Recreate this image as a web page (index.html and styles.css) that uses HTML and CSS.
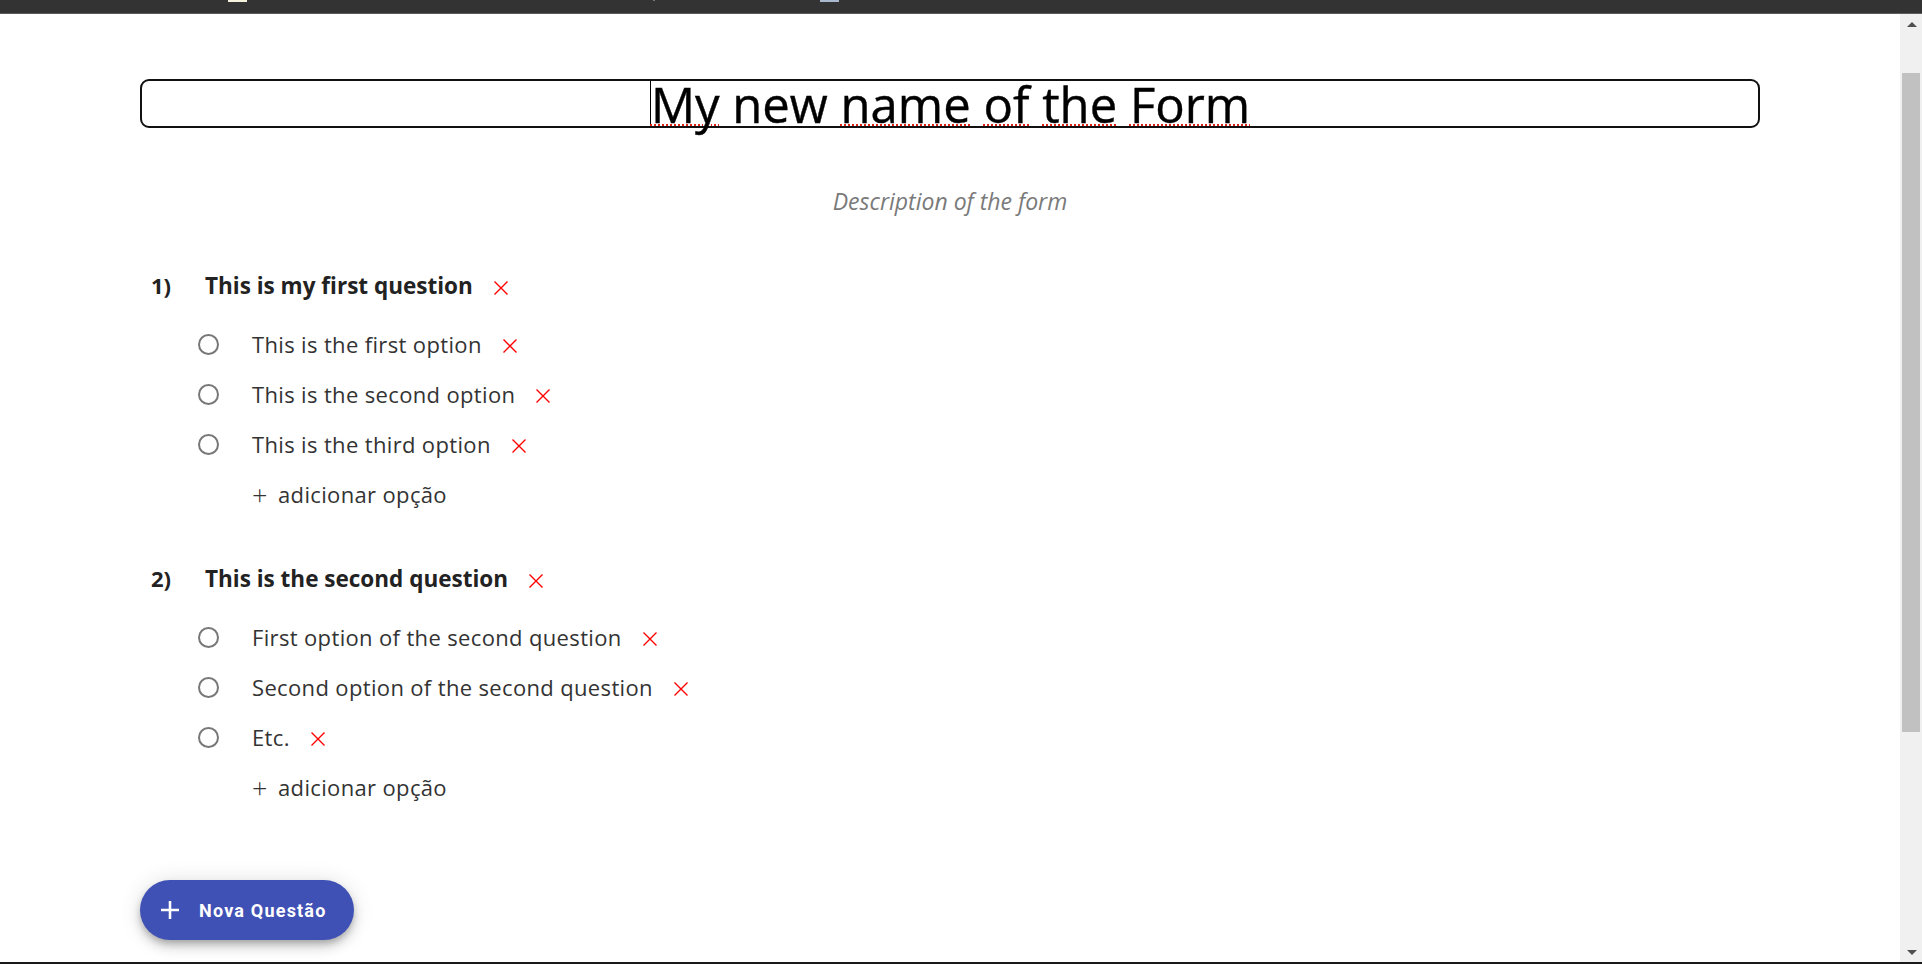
FILE: index.html
```html
<!DOCTYPE html>
<html lang="pt">
<head>
<meta charset="utf-8">
<title>Form</title>
<link rel="stylesheet" href="styles.css">
</head>
<body>
<div class="window">
  <div class="topbar"><span class="mark mark-a"></span><span class="mark mark-dot"></span><span class="mark mark-b"></span></div>
  <div class="viewport">
    <main class="page">
      <div class="title-box">
        <span class="title-text"><span class="sp">My</span> new <span class="sp">name</span> <span class="sp">of</span> <span class="sp">the</span> <span class="sp">Form</span></span>
      </div>
      <p class="description">Description of the form</p>

      <section class="question">
        <div class="q-row">
          <span class="q-num">1)</span>
          <span class="q-title">This is my first question</span>
          <svg class="del" viewBox="0 0 16 16"><path d="M1.5 1.5L14.5 14.5M14.5 1.5L1.5 14.5"/></svg>
        </div>
        <ul class="options">
          <li class="opt"><span class="radio"></span><span class="opt-text">This is the first option</span><svg class="del" viewBox="0 0 16 16"><path d="M1.5 1.5L14.5 14.5M14.5 1.5L1.5 14.5"/></svg></li>
          <li class="opt"><span class="radio"></span><span class="opt-text">This is the second option</span><svg class="del" viewBox="0 0 16 16"><path d="M1.5 1.5L14.5 14.5M14.5 1.5L1.5 14.5"/></svg></li>
          <li class="opt"><span class="radio"></span><span class="opt-text">This is the third option</span><svg class="del" viewBox="0 0 16 16"><path d="M1.5 1.5L14.5 14.5M14.5 1.5L1.5 14.5"/></svg></li>
          <li class="opt add"><span class="plus">+</span><span class="opt-text">adicionar opção</span></li>
        </ul>
      </section>

      <section class="question">
        <div class="q-row">
          <span class="q-num">2)</span>
          <span class="q-title">This is the second question</span>
          <svg class="del" viewBox="0 0 16 16"><path d="M1.5 1.5L14.5 14.5M14.5 1.5L1.5 14.5"/></svg>
        </div>
        <ul class="options">
          <li class="opt"><span class="radio"></span><span class="opt-text">First option of the second question</span><svg class="del" viewBox="0 0 16 16"><path d="M1.5 1.5L14.5 14.5M14.5 1.5L1.5 14.5"/></svg></li>
          <li class="opt"><span class="radio"></span><span class="opt-text">Second option of the second question</span><svg class="del" viewBox="0 0 16 16"><path d="M1.5 1.5L14.5 14.5M14.5 1.5L1.5 14.5"/></svg></li>
          <li class="opt"><span class="radio"></span><span class="opt-text">Etc.</span><svg class="del" viewBox="0 0 16 16"><path d="M1.5 1.5L14.5 14.5M14.5 1.5L1.5 14.5"/></svg></li>
          <li class="opt add"><span class="plus">+</span><span class="opt-text">adicionar opção</span></li>
        </ul>
      </section>

      <button class="fab" type="button">
        <svg class="fab-icon" viewBox="5 5 14 14"><path d="M19 13h-6v6h-2v-6H5v-2h6V5h2v6h6v2z"/></svg>
        <span class="fab-label">Nova Questão</span>
      </button>
    </main>
    <div class="scrollbar">
      <div class="sb-btn"><span class="tri-up"></span></div>
      <div class="sb-track"><div class="sb-thumb"></div></div>
      <div class="sb-btn"><span class="tri-down"></span></div>
    </div>
  </div>
  <div class="bottomline"></div>
</div>
</body>
</html>
```

FILE: styles.css
```css
* { box-sizing: border-box; }

html, body {
  margin: 0;
  padding: 0;
  background: #ffffff;
}

body {
  font-family: "Open Sans", "Noto Sans", sans-serif;
  color: #333333;
}

.window {
  height: 964px;
  display: flex;
  flex-direction: column;
  overflow: hidden;
}

.topbar {
  height: 14px;
  flex: none;
  background: #333333;
  border-bottom: 1px solid #5c5c5c;
  display: flex;
  align-items: flex-start;
}

.mark {
  display: block;
  height: 2px;
  width: 19px;
}

.mark-a {
  margin-left: 228px;
  background: #f4f1dc;
}

.mark-dot {
  margin-left: 406px;
  width: 2px;
  height: 1px;
  background: #777777;
}

.mark-b {
  margin-left: 165px;
  background: #a9b8cc;
}

.viewport {
  flex: 1;
  display: flex;
  min-height: 0;
}

.page {
  flex: 1;
  padding: 0 140px;
}

.title-box {
  margin-top: 65px;
  height: 49px;
  border: 2px solid #111111;
  border-radius: 9px;
  display: flex;
  justify-content: center;
}

.title-text {
  font-family: "Open Sans", "Noto Sans", sans-serif;
  font-size: 49px;
  line-height: 47px;
  height: 45px;
  color: #000000;
  border-left: 1px solid #000000;
  white-space: nowrap;
  -webkit-text-stroke: 0.4px #000000;
}

.sp {
  text-decoration: underline dotted #e0201a;
  text-decoration-thickness: 2px;
  text-underline-offset: 1px;
}

.description {
  margin: 58px 0 0;
  text-align: center;
  font-style: italic;
  font-size: 23px;
  line-height: 30px;
  color: #7a7a7a;
}

.question {
  margin-top: 50px;
}

.question + .question {
  margin-top: 40px;
}

.q-row {
  height: 40px;
  display: flex;
  align-items: center;
  padding-left: 11px;
}

.q-num {
  width: 54px;
  font-weight: 700;
  font-size: 22px;
  color: #222222;
  margin-bottom: 2px;
}

.q-title {
  font-weight: 700;
  font-size: 22.5px;
  color: #222222;
  margin-bottom: 2px;
}

.del {
  width: 16px;
  height: 16px;
  margin-left: 20px;
  margin-top: 4px;
  flex: none;
}

.del path {
  stroke: #ff0000;
  stroke-width: 1.4;
  fill: none;
}

.options {
  list-style: none;
  margin: 13px 0 0;
  padding: 0 0 0 58px;
}

.opt {
  height: 50px;
  display: flex;
  align-items: center;
}

.radio {
  width: 21px;
  height: 21px;
  border: 2px solid #777777;
  border-radius: 50%;
  flex: none;
  margin-right: 33px;
}

.opt-text {
  font-size: 22px;
  letter-spacing: 0.35px;
  color: #333333;
}

.opt .del {
  margin-left: 20px;
}

.plus {
  margin-left: 54px;
  width: 26px;
  font-size: 27px;
  font-weight: 300;
  line-height: 30px;
  color: #333333;
  margin-top: 2px;
}

.fab {
  margin-top: 68px;
  height: 60px;
  border: none;
  border-radius: 30px;
  background: #3f51b5;
  color: #ffffff;
  display: flex;
  align-items: center;
  padding: 0 27px 0 21px;
  box-shadow: 0 4px 6px -1px rgba(0,0,0,0.2), 0 7px 12px 0 rgba(0,0,0,0.14), 0 1px 22px 0 rgba(0,0,0,0.12);
  cursor: pointer;
}

.fab-icon {
  width: 18px;
  height: 18px;
  fill: #ffffff;
  margin-right: 20px;
}

.fab-label {
  font-family: Roboto, "Noto Sans", sans-serif;
  font-weight: 700;
  font-size: 18px;
  letter-spacing: 1.2px;
}

.scrollbar {
  width: 22px;
  flex: none;
  background: #f0f0f0;
  display: flex;
  flex-direction: column;
}

.sb-btn {
  height: 20px;
  flex: none;
  display: flex;
  align-items: center;
  justify-content: center;
}

.tri-up {
  width: 0;
  height: 0;
  border-left: 5px solid transparent;
  border-right: 5px solid transparent;
  border-bottom: 5px solid #505050;
  margin-left: 2px;
}

.tri-down {
  width: 0;
  height: 0;
  border-left: 5px solid transparent;
  border-right: 5px solid transparent;
  border-top: 5px solid #505050;
  margin-left: 2px;
}

.sb-track {
  flex: 1;
  padding: 39px 2px 0 2px;
}

.sb-thumb {
  height: 659px;
  background: #c1c1c1;
}

.bottomline {
  height: 2px;
  flex: none;
  background: #1a1a1a;
}
```
